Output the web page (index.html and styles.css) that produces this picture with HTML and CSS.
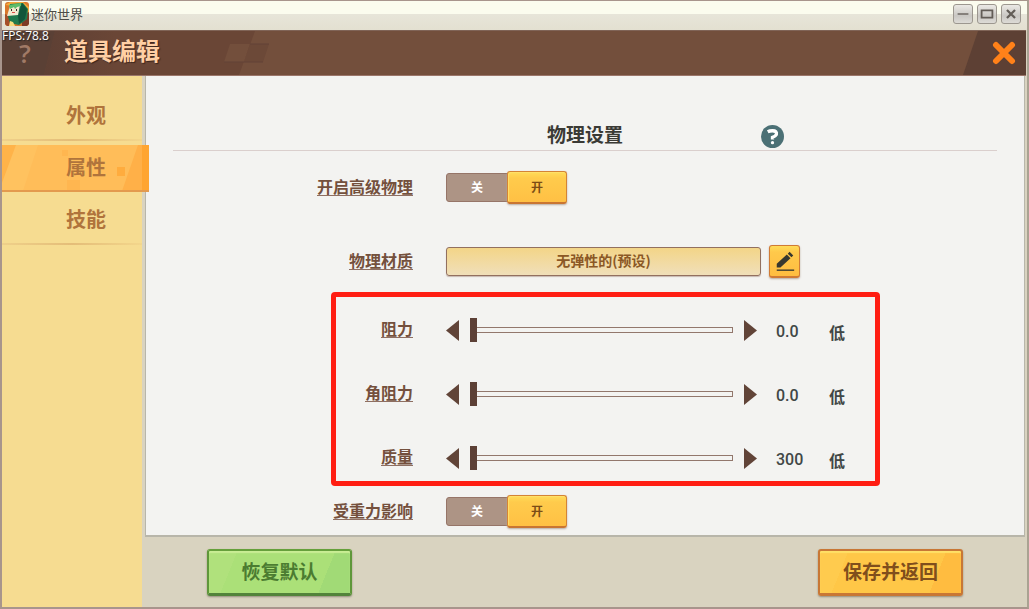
FILE: index.html
```html
<!DOCTYPE html>
<html lang="zh-CN">
<head>
<meta charset="utf-8">
<meta name="viewport" content="width=device-width, initial-scale=1">
<title>迷你世界</title>
<link rel="stylesheet" href="styles.css">
</head>
<body>
<div class="window">
  <div class="titlebar">
    <svg class="app-icon" viewBox="0 0 24 24" aria-hidden="true">
      <rect width="24" height="24" rx="3" fill="#d9772b"/>
      <path d="M0 3l5-3h13l6 5v9l-5-9z" fill="#f4a93c"/>
      <path d="M0 12l5 2v10H2l-2-2z" fill="#a4502a"/>
      <path d="M17 14l7-4v12l-2 2h-5z" fill="#7c3a25"/>
      <path d="M5 2l13-1 5 6-1 10-8 6-9-2-2-6z" fill="#1e7a4d"/>
      <path d="M17 1l5 6-2 10-6 5-1-8z" fill="#12553a"/>
      <path d="M5 4l10-1-2 10-11 1z" fill="#f2ead0"/>
      <path d="M4 3l12-2v3l-4 1-2 2-1-2-4 2z" fill="#5dbd69"/>
      <path d="M6 7h1v2H6zM11 7h1v2h-1z" fill="#3c2c28"/>
      <path d="M7 10h3v1H7z" fill="#dc5148"/>
      <path d="M5 19l3 1 2 4H4z" fill="#f5dd7c"/>
    </svg>
    <span class="app-name">迷你世界</span>
    <div class="window-buttons">
      <button class="window-button" aria-label="最小化"><svg viewBox="0 0 20 20"><path d="M4 10h12" stroke-width="1.5"/></svg></button>
      <button class="window-button" aria-label="最大化"><svg viewBox="0 0 20 20"><path d="M4 6h12v8H4z" stroke-width="2"/></svg></button>
      <button class="window-button" aria-label="关闭窗口"><svg viewBox="0 0 20 20"><path d="M5.500 5.500l9 9M14.500 5.500l-9 9" stroke-width="2.500"/></svg></button>
    </div>
  </div>

  <header class="header">
    <svg class="header-art" viewBox="0 0 300 44" aria-hidden="true">
      <defs>
        <linearGradient id="shade"><stop offset="0" stop-color="#5e4034"/><stop offset="1" stop-color="#6a4636"/></linearGradient>
      </defs>
      <path d="M0 0h253l-16 44H0z" fill="#6a4636"/>
      <path d="M53 0h60v44H42z" fill="url(#shade)"/>
      <path d="M0 0h53L42 44H0z" fill="#5a4035"/>
      <path d="M228 13h20l-6 18h-20z" fill="#734f3c"/>
      <path d="M248 13h19l-6 18h-19z" fill="#6c4938"/>
      <path d="M222 31h39M248 13h19" stroke="#624236" fill="none"/>
    </svg>
    <span class="fps">FPS:78.8</span>
    <button class="header-help" aria-label="帮助">?</button>
    <h1 class="header-title">道具编辑</h1>
    <button class="close" aria-label="关闭">
      <svg class="close-icon" viewBox="0 0 24 24"><path d="M4 4l16 16M20 4L4 20" stroke="#ff8119" stroke-width="6" stroke-linecap="round"/></svg>
    </button>
  </header>

  <div class="workspace">
    <nav class="sidebar" aria-label="道具编辑">
      <button class="tab">外观</button>
      <button class="tab tab-active" aria-current="page">
        <svg class="tab-art" viewBox="0 0 147 46" preserveAspectRatio="none" aria-hidden="true">
          <path d="M0 0h14L0 38z" fill="#ffb349"/>
          <path d="M14 0h22L21 46H0v-8z" fill="#ffc464" opacity=".6"/>
          <path d="M136 0h4v46h-20z" fill="#ffb048"/>
          <path d="M140 0h7v46h-7z" fill="#ffa531"/>
          <path d="M115 22h8v9h-8z" fill="#ffac3e"/>
          <path d="M65 35h13v11H65zM60 5h6v6h-6z" fill="#ffb650"/>
        </svg>
        <span class="tab-text">属性</span>
      </button>
      <button class="tab">技能</button>
    </nav>

    <div class="content">
      <main class="panel">
        <div class="panel-heading">
          <h2 class="panel-title">物理设置</h2>
          <button class="panel-help" aria-label="物理设置帮助">
            <svg viewBox="0 0 24 24"><circle cx="12" cy="12" r="12" fill="#4b7075"/><path d="M7 7Q9 6 12 6q5 0 4 4-1 2-4 3v2" fill="none" stroke="#fff" stroke-width="3.500"/><circle cx="12" cy="18.500" r="1.700" fill="#fff"/></svg>
          </button>
        </div>

        <form class="form">
          <div class="row">
            <span class="label" id="advanced">开启高级物理</span>
            <div class="toggle" role="radiogroup" aria-labelledby="advanced">
              <label class="option"><input class="option-input" type="radio" name="advanced">关</label>
              <label class="option option-on"><input class="option-input" type="radio" name="advanced" checked>开</label>
            </div>
          </div>

          <div class="row row-material">
            <label class="label" for="material">物理材质</label>
            <div class="material">
              <input class="material-name" id="material" type="text" value="无弹性的(预设)" readonly>
              <button class="edit" type="button" aria-label="编辑物理材质">
                <svg viewBox="0 0 24 24"><path d="M3 19v-4L14 5l4 4L7 19zM15 4l2-2 4 4-2 2z" fill="#38382f"/><path d="M3 22h19" stroke="#38382f" stroke-width="1.500"/></svg>
              </button>
            </div>
          </div>

          <div class="highlight">
            <div class="slider-row">
              <label class="label" for="drag">阻力</label>
              <div class="slider">
                <button class="arrow" type="button" aria-label="减少阻力"><svg viewBox="0 0 13 21"><path d="M0 10.500L13 0v21z"/></svg></button>
                <input class="range" id="drag" type="range" min="0" max="100" value="0">
                <button class="arrow" type="button" aria-label="增加阻力"><svg viewBox="0 0 13 21"><path d="M13 10.500L0 0v21z"/></svg></button>
              </div>
              <output class="value" for="drag">0.0</output>
              <span class="level">低</span>
            </div>
            <div class="slider-row">
              <label class="label" for="angular">角阻力</label>
              <div class="slider">
                <button class="arrow" type="button" aria-label="减少角阻力"><svg viewBox="0 0 13 21"><path d="M0 10.500L13 0v21z"/></svg></button>
                <input class="range" id="angular" type="range" min="0" max="100" value="0">
                <button class="arrow" type="button" aria-label="增加角阻力"><svg viewBox="0 0 13 21"><path d="M13 10.500L0 0v21z"/></svg></button>
              </div>
              <output class="value" for="angular">0.0</output>
              <span class="level">低</span>
            </div>
            <div class="slider-row">
              <label class="label" for="mass">质量</label>
              <div class="slider">
                <button class="arrow" type="button" aria-label="减少质量"><svg viewBox="0 0 13 21"><path d="M0 10.500L13 0v21z"/></svg></button>
                <input class="range" id="mass" type="range" min="300" max="10000" value="300">
                <button class="arrow" type="button" aria-label="增加质量"><svg viewBox="0 0 13 21"><path d="M13 10.500L0 0v21z"/></svg></button>
              </div>
              <output class="value" for="mass">300</output>
              <span class="level">低</span>
            </div>
          </div>

          <div class="row">
            <span class="label" id="gravity">受重力影响</span>
            <div class="toggle" role="radiogroup" aria-labelledby="gravity">
              <label class="option"><input class="option-input" type="radio" name="gravity">关</label>
              <label class="option option-on"><input class="option-input" type="radio" name="gravity" checked>开</label>
            </div>
          </div>
        </form>
      </main>

      <footer class="footer">
        <button class="action action-reset">恢复默认</button>
        <button class="action action-save">保存并返回</button>
      </footer>
    </div>
  </div>
</div>
</body>
</html>
```
FILE: styles.css
```css
* {
  box-sizing: border-box;
}

body {
  margin: 0;
  font-family: "Noto Sans CJK SC", "Noto Sans", sans-serif;
  color: #3a3a35;
}

button,
input {
  margin: 0;
  padding: 0;
  border: 0;
  background: none;
  font: inherit;
  color: inherit;
}

svg {
  display: block;
}

.window {
  display: flex;
  flex-direction: column;
  min-height: 100vh;
  border: 1px solid #a8958c;
  border-width: 1px 2px 2px;
  border-right-color: #aaa292;
  background: #d9d3c0;
}

.titlebar {
  display: flex;
  align-items: center;
  gap: 2px;
  height: 29px;
  padding: 0 6px 3px 3px;
  background: linear-gradient(#fbfcee 0 45%, #e7e5d9 46%, #e3e0d1);
}

.app-icon {
  width: 24px;
  height: 24px;
}

.app-name {
  flex: 1;
  font-size: 13px;
  line-height: 20px;
  color: #4c4b46;
}

.window-buttons {
  display: flex;
  gap: 4px;
}

.window-button {
  width: 20px;
  height: 20px;
  border: 1px solid #9c978f;
  border-radius: 3px;
  background: linear-gradient(#ebe9e5, #c9c7c3 60%, #dddbd6);
}

.window-button path {
  fill: none;
  stroke: #625d57;
}

.header {
  position: relative;
  display: flex;
  align-items: center;
  height: 46px;
  margin-right: 1px;
  border-top: 1px solid #806457;
  border-bottom: 1px solid #9b766a;
  background: #734f3c;
}

.header-art {
  position: absolute;
  top: 0;
  left: 0;
  width: 300px;
  height: 44px;
}

.fps {
  position: absolute;
  top: -1px;
  left: 0;
  font-family: "Open Sans", "Noto Sans", sans-serif;
  font-size: 12px;
  line-height: 12px;
  color: #fff;
  text-shadow: 1px 1px 1px #222;
}

.header-help {
  position: relative;
  width: 46px;
  font-family: "Open Sans", "Noto Sans", sans-serif;
  font-size: 26px;
  font-weight: 600;
  line-height: 20px;
  color: #a17a66;
}

.header-title {
  position: relative;
  flex: 1;
  margin: 0;
  padding: 0 16px 6px;
  font-size: 24px;
  font-weight: 700;
  line-height: 36px;
  color: #ffcfa4;
  text-shadow: 1px 1px 1px #3b261c;
}

.close {
  display: grid;
  place-items: center;
  align-self: stretch;
  width: 63px;
  padding-left: 18px;
  background: #5d4034;
  clip-path: polygon(15px 0, 100% 0, 100% 100%, 0 100%);
}

.close-icon {
  width: 24px;
  height: 24px;
}

.workspace {
  display: flex;
  flex: 1;
}

.sidebar {
  display: flex;
  flex-direction: column;
  gap: 6px;
  width: 140px;
  padding-top: 17px;
  background: #f6dc91;
}

.tab {
  position: relative;
  height: 46px;
  padding: 0 0 2px 64px;
  font-size: 20px;
  font-weight: 700;
  line-height: 44px;
  text-align: left;
  color: #b0743c;
}

.tab::after {
  content: "";
  position: absolute;
  right: 0;
  bottom: -2px;
  left: 0;
  height: 2px;
  background: linear-gradient(90deg, #efd08a, #e4bd78, #f3d68c);
}

.tab-active {
  z-index: 1;
  margin-right: -7px;
  background: #ffbd59;
}

.tab-active::after {
  bottom: -1px;
  background: #e39a4e;
}

.tab-art {
  position: absolute;
  top: 0;
  left: 0;
  width: 100%;
  height: 100%;
}

.tab-text {
  position: relative;
}

.content {
  display: flex;
  flex: 1;
  flex-direction: column;
  min-width: 0;
  padding-left: 3px;
}

.panel {
  flex: 1;
  margin-right: 2px;
  padding: 46px 27px 7px;
  border: 1px solid #b8b6aa;
  border-width: 0 1px 2px;
  background: #f3f3f1;
}

.panel-heading {
  display: grid;
  grid-template-columns: 1fr auto 1fr;
  align-items: center;
  height: 29px;
  border-bottom: 1px solid #dacfcd;
}

.panel-title {
  grid-column: 2;
  margin: 0;
  padding-bottom: 4px;
  font-size: 19px;
  font-weight: 700;
  line-height: 24px;
}

.panel-help {
  width: 23px;
  height: 25px;
  margin-left: 138px;
}

.form {
  width: 567px;
  max-width: 100%;
  margin: 20px 0 0 140px;
}

.row {
  display: grid;
  grid-template-columns: 100px minmax(0, 1fr);
  gap: 33px;
  align-items: center;
  min-height: 33px;
}

.row-material {
  margin: 41px 0 14px;
}

.label {
  justify-self: end;
  margin-bottom: 2px;
  padding-bottom: 1px;
  border-bottom: 1px solid #8e6f62;
  font-size: 16px;
  font-weight: 700;
  line-height: 16px;
  white-space: nowrap;
  color: #74503d;
}

.toggle {
  display: flex;
  align-items: center;
}

.option {
  width: 62px;
  height: 29px;
  border: 1px solid #967568;
  border-radius: 3px 0 0 3px;
  background: #ad9485;
  font-size: 12px;
  font-weight: 700;
  line-height: 26px;
  text-align: center;
  color: #fff;
}

.option-on {
  width: 60px;
  height: 33px;
  margin-left: -1px;
  border-color: #d48435;
  border-bottom: 2px solid #c97532;
  border-radius: 3px;
  background: linear-gradient(#ffdc58, #ffcb4c 20%, #ffc044);
  box-shadow: 0 1px 2px #b7aaa0, inset 1px 1px 1px #ffe06b;
  line-height: 30px;
  color: #7c4c16;
}

.option-input {
  position: absolute;
  opacity: 0;
}

.material {
  display: flex;
  align-items: center;
  gap: 8px;
  margin-right: 80px;
}

.material-name {
  flex: 1;
  width: 100%;
  min-width: 0;
  height: 29px;
  padding-bottom: 4px;
  border: 1px solid #92705f;
  border-radius: 3px;
  background: linear-gradient(#f3d588, #f0dfb9);
  box-shadow: 0 1px 1px #c7b9b1;
  font-size: 14px;
  font-weight: 700;
  text-align: center;
  color: #8b5825;
}

.edit {
  display: grid;
  flex-shrink: 0;
  place-items: center;
  width: 31px;
  height: 33px;
  border: 1px solid #d07b35;
  border-bottom-width: 2px;
  border-radius: 3px;
  background: linear-gradient(#ffdc58, #ffc94b 20%, #ffbd40);
  box-shadow: 0 1px 2px #b7aaa0;
}

.edit svg {
  width: 22px;
  height: 22px;
}

.highlight {
  display: grid;
  gap: 18px;
  margin: 0 0 9px 18px;
  padding-top: 10px;
  border: 5px solid #ff1e13;
  border-radius: 4px;
}

.slider-row {
  display: grid;
  grid-template-columns: 77px 1fr 53px 46px;
  align-items: center;
  height: 46px;
}

.slider {
  display: flex;
  align-items: center;
  gap: 11px;
  padding: 0 19px 0 33px;
}

.arrow {
  width: 13px;
  height: 21px;
}

.arrow path {
  fill: #614438;
}

.range {
  flex: 1;
  min-width: 0;
  height: 24px;
  appearance: none;
}

.range::-webkit-slider-runnable-track {
  height: 6px;
  border: 1px solid #92776c;
}

.range::-webkit-slider-thumb {
  width: 7px;
  height: 24px;
  margin: -10px 0 0 -1px;
  appearance: none;
  background: #5c4036;
}

.value,
.level {
  padding-top: 4px;
  font-size: 16px;
  line-height: 20px;
  color: #414746;
}

.value {
  font-family: Roboto, "Noto Sans CJK SC", sans-serif;
  font-weight: 500;
}

.level {
  font-weight: 700;
}

.footer {
  display: flex;
  justify-content: space-between;
  padding: 12px 64px 11px 62px;
}

.action {
  width: 145px;
  height: 47px;
  padding-bottom: 3px;
  border: 2px solid;
  border-bottom-width: 3px;
  border-radius: 3px;
  font-size: 19px;
  font-weight: 700;
}

.action-reset {
  border-color: #66a03b #5f973a #52833a;
  background: linear-gradient(112deg, #b0e17c 18%, #abe078 18% 80%, #a1da76 80%);
  box-shadow: 0 1px 2px #948c7c, inset 0 2px 1px #c9ed94;
  color: #4b7c31;
}

.action-save {
  border-color: #c87735;
  background: linear-gradient(112deg, #ffcb4e 18%, #ffc747 18% 80%, #ffbc40 80%);
  box-shadow: 0 1px 2px #948c7c, inset 0 2px 1px #ffe066;
  color: #804e1c;
}
```
